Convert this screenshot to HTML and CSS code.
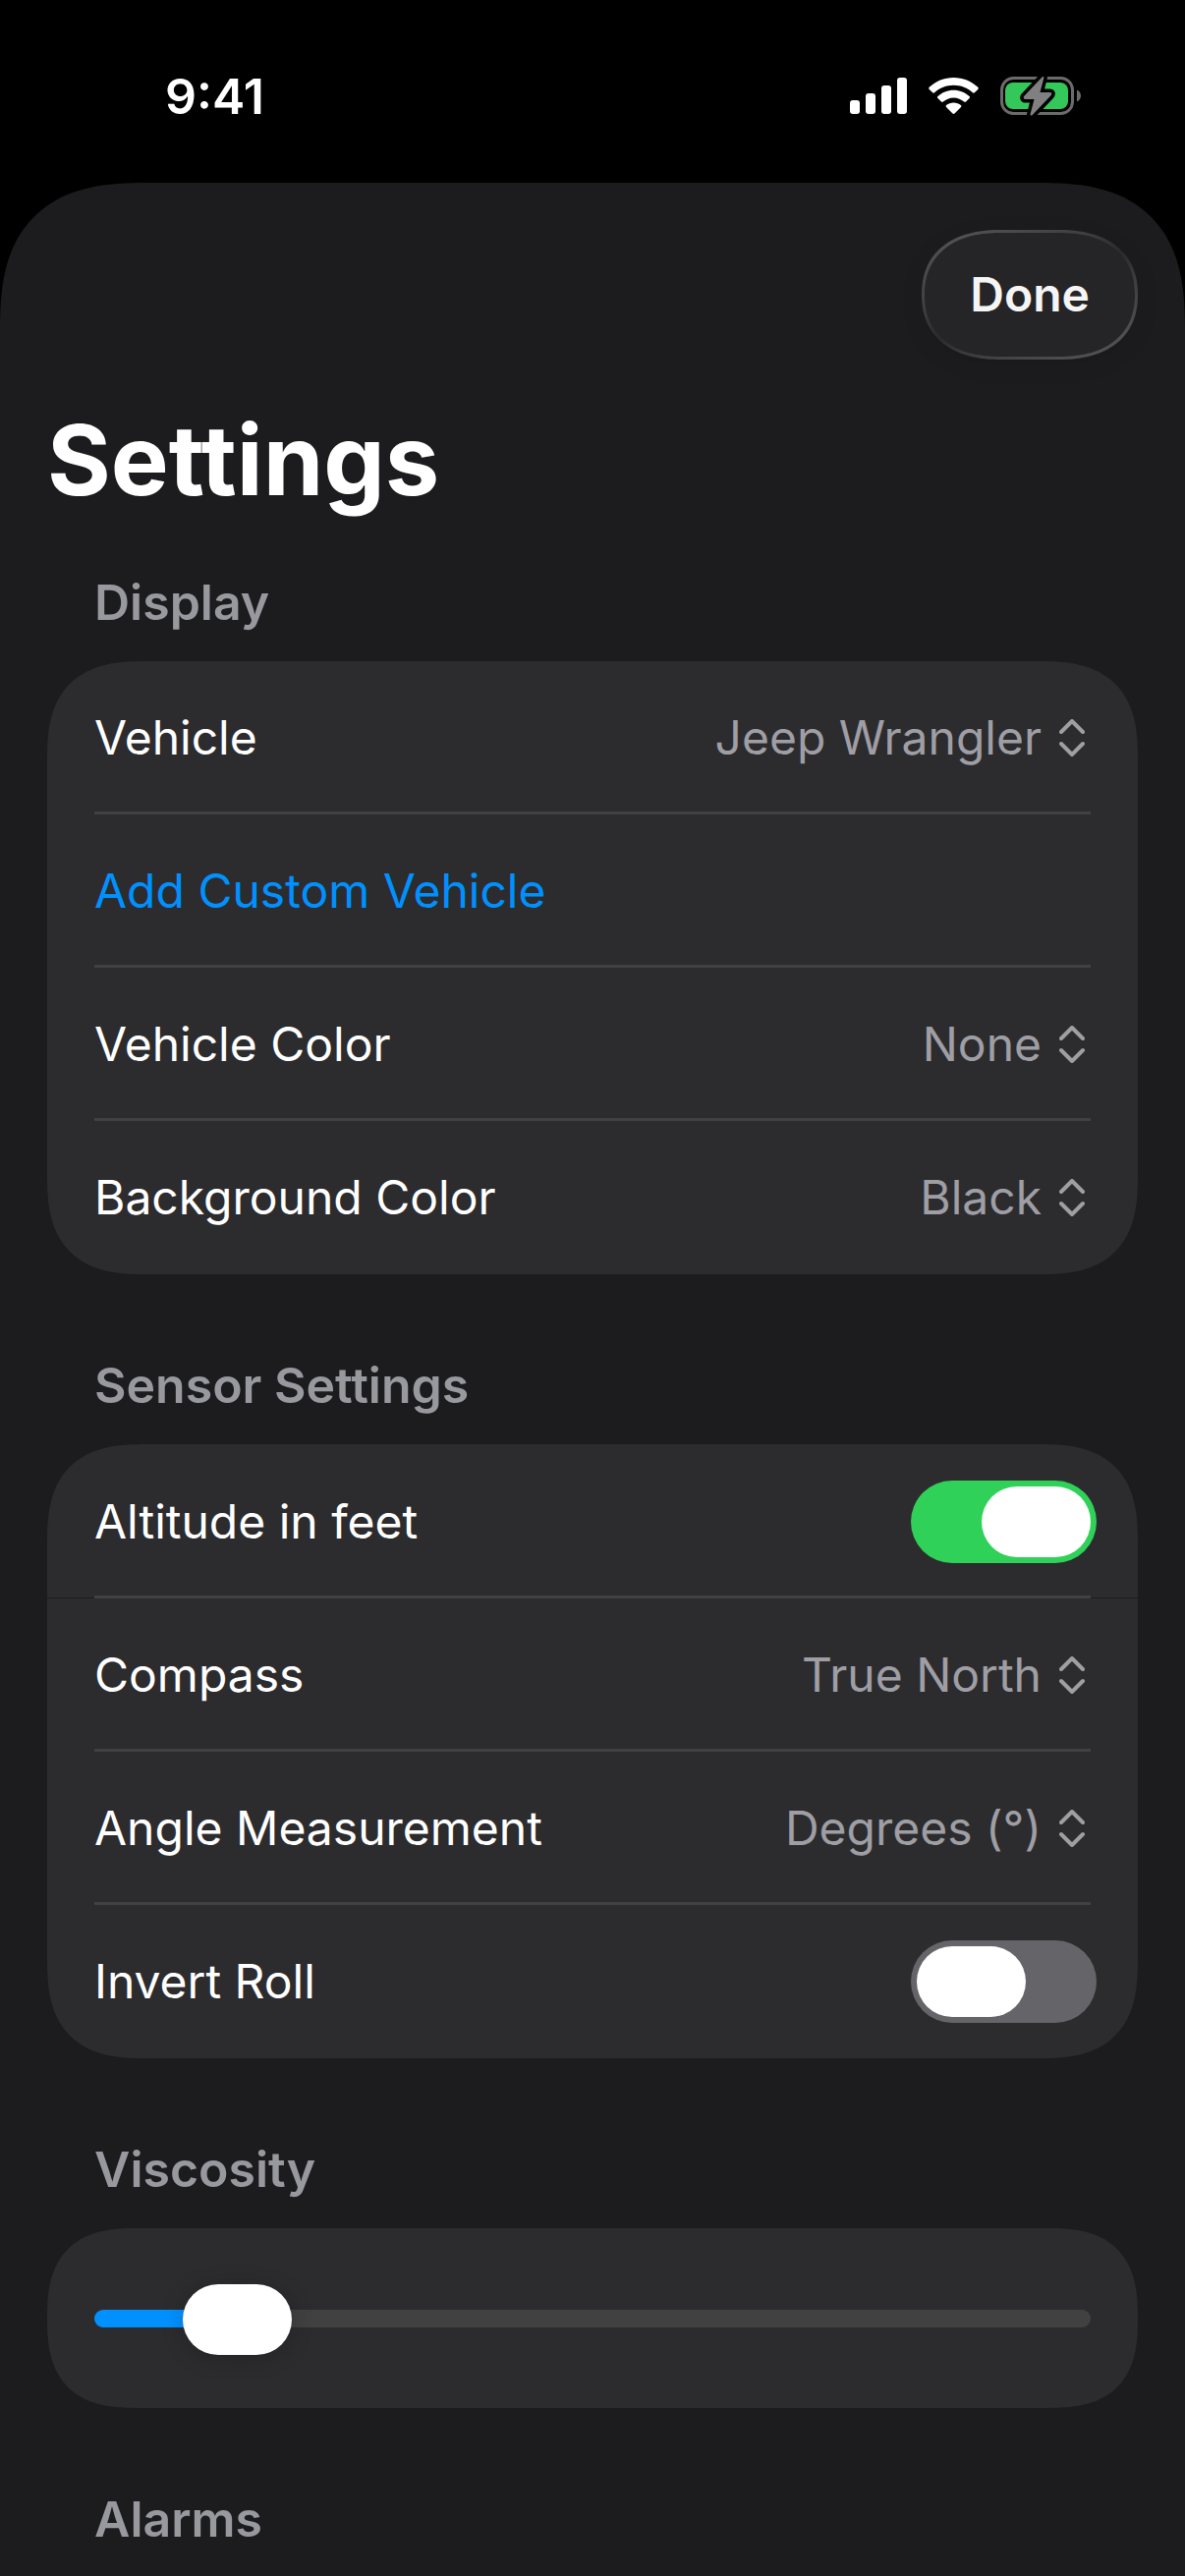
FILE: index.html
```html
<!DOCTYPE html>
<html lang="en">
<head>
  <meta charset="UTF-8" />
  <meta name="viewport" content="width=device-width, initial-scale=1" />
  <title>Settings</title>
  <link rel="stylesheet" href="styles.css">
</head>
<body>
  <header class="status-bar">
    <span class="status-time">9:41</span>
    <div class="status-icons">
      <svg class="icon-signal" width="58" height="38" viewBox="0 0 58 38" aria-hidden="true">
        <rect x="0" y="23" width="10" height="14" rx="3" />
        <rect x="16" y="16" width="10" height="21" rx="3" />
        <rect x="32" y="8" width="10" height="29" rx="3" />
        <rect x="48" y="0" width="10" height="37" rx="3" />
      </svg>
      <svg class="icon-wifi" width="51" height="38" viewBox="0 0 51 38" aria-hidden="true">
        <path d="M25.5 0C35 0 43.800 3.700 50.300 9.800C50.900 10.400 50.900 11.300 50.300 11.900L46.800 15.300C46.300 15.800 45.500 15.800 44.900 15.300C39.700 10.400 32.900 7.700 25.500 7.700C18.100 7.700 11.300 10.400 6.100 15.300C5.500 15.800 4.700 15.800 4.200 15.300L.7 11.900C.1 11.300 .1 10.400 .7 9.800C7.200 3.700 16 0 25.500 0Z" />
        <path d="M25.500 12.700C31.700 12.700 37.300 15.100 41.600 19C42.200 19.600 42.200 20.500 41.600 21.100L38 24.600C37.500 25.100 36.700 25.100 36.100 24.600C33.300 22 29.600 20.400 25.500 20.400C21.400 20.400 17.700 22 14.900 24.600C14.300 25.100 13.500 25.100 13 24.600L9.400 21.100C8.800 20.500 8.800 19.600 9.400 19C13.700 15.100 19.300 12.700 25.500 12.700Z" />
        <path d="M25.500 25.400C28.300 25.400 30.900 26.400 32.900 28C33.500 28.600 33.600 29.400 33 30L26.500 36.500C25.900 37.100 25.100 37.100 24.500 36.500L18 30C17.400 29.400 17.500 28.600 18.100 28C20.100 26.400 22.700 25.400 25.500 25.400Z" />
      </svg>
      <svg class="icon-battery" width="82" height="42" viewBox="0 0 82 42" aria-hidden="true">
        <rect class="battery-shell" x="1.500" y="2.500" width="72" height="36" rx="12" />
        <path class="battery-shell-cap" d="M78 14.500C80.300 15.300 82 17.700 82 20.500S80.300 25.700 78 26.500Z" />
        <rect class="battery-level" x="5" y="7" width="64" height="27" rx="8" />
        <path class="battery-bolt-gap" d="M42.500 1.500L24.500 20.500C23 22.300 23.600 24 25.800 24H34.500L30.600 39C30.300 40.800 31.700 41 32.700 40L51.300 20.500C53 18.600 52.500 17 50.300 17H40.500L44.300 2.500C44.700 .8 43.500 .5 42.500 1.500Z" />
        <path class="battery-bolt" d="M42.500 1.500L24.500 20.500C23 22.300 23.600 24 25.800 24H34.500L30.600 39C30.300 40.800 31.700 41 32.700 40L51.300 20.500C53 18.600 52.500 17 50.300 17H40.500L44.300 2.500C44.700 .8 43.500 .5 42.500 1.500Z" />
      </svg>
    </div>
  </header>

  <main class="sheet">
    <div class="sheet-toolbar">
      <button type="button" class="done-button">Done</button>
    </div>
    <h1 class="sheet-title">Settings</h1>

    <section class="group">
      <h2 class="group-title">Display</h2>
      <div class="card">
        <div class="row">
          <label for="vehicle">Vehicle</label>
          <select id="vehicle" class="picker">
            <option>Jeep Wrangler</option>
          </select>
          <svg class="chevrons" viewBox="0 0 26 38" aria-hidden="true"><path d="M2 13L13 2L24 13M2 25L13 36L24 25" /></svg>
        </div>
        <div class="row">
          <button type="button" class="link-button">Add Custom Vehicle</button>
        </div>
        <div class="row">
          <label for="vehicleColor">Vehicle Color</label>
          <select id="vehicleColor" class="picker">
            <option>None</option>
          </select>
          <svg class="chevrons" viewBox="0 0 26 38" aria-hidden="true"><path d="M2 13L13 2L24 13M2 25L13 36L24 25" /></svg>
        </div>
        <div class="row">
          <label for="backgroundColor">Background Color</label>
          <select id="backgroundColor" class="picker">
            <option>Black</option>
          </select>
          <svg class="chevrons" viewBox="0 0 26 38" aria-hidden="true"><path d="M2 13L13 2L24 13M2 25L13 36L24 25" /></svg>
        </div>
      </div>
    </section>

    <section class="group">
      <h2 class="group-title">Sensor Settings</h2>
      <div class="card">
        <div class="row row-split">
          <label for="altitudeFeet">Altitude in feet</label>
          <input type="checkbox" role="switch" id="altitudeFeet" class="switch" checked />
        </div>
        <div class="row">
          <label for="compass">Compass</label>
          <select id="compass" class="picker">
            <option>True North</option>
          </select>
          <svg class="chevrons" viewBox="0 0 26 38" aria-hidden="true"><path d="M2 13L13 2L24 13M2 25L13 36L24 25" /></svg>
        </div>
        <div class="row">
          <label for="angle">Angle Measurement</label>
          <select id="angle" class="picker">
            <option>Degrees (°)</option>
          </select>
          <svg class="chevrons" viewBox="0 0 26 38" aria-hidden="true"><path d="M2 13L13 2L24 13M2 25L13 36L24 25" /></svg>
        </div>
        <div class="row">
          <label for="invertRoll">Invert Roll</label>
          <input type="checkbox" role="switch" id="invertRoll" class="switch" />
        </div>
      </div>
    </section>

    <section class="group">
      <h2 class="group-title"><label for="viscosity">Viscosity</label></h2>
      <div class="card card-slider">
        <input type="range" id="viscosity" class="slider" min="0" max="100" value="10" />
      </div>
    </section>

    <section class="group">
      <h2 class="group-title">Alarms</h2>
    </section>
  </main>
</body>
</html>
```

FILE: styles.css
```css
* {
  box-sizing: border-box;
}

body {
  display: flex;
  flex-direction: column;
  min-height: 100vh;
  margin: 0;
  background: #000;
  color: #fff;
  font-family: Inter, "Liberation Sans", sans-serif;
  font-size: 50px;
  line-height: 60px;
}

button, select, input {
  margin: 0;
  font: inherit;
}

/* status bar */
.status-bar {
  display: flex;
  justify-content: space-between;
  align-items: center;
  padding: 68px 106px 58px 168px;
}

.status-time {
  font-weight: 600;
}

.status-icons {
  display: flex;
  align-items: center;
  gap: 22px;
}

.icon-signal, .icon-wifi {
  fill: #fff;
}

.battery-shell {
  fill: none;
  stroke: #6b6b6b;
  stroke-width: 3;
}

.battery-shell-cap {
  fill: #6b6b6b;
}

.battery-level {
  fill: #34c759;
}

.battery-bolt {
  fill: #808080;
}

.battery-bolt-gap {
  stroke: #000;
  stroke-width: 7;
}

/* sheet */
.sheet {
  flex: 1;
  padding: 48px 48px 28px;
  background: #1c1c1e;
  border-radius: 117px 117px 0 0;
}

.sheet-toolbar {
  display: flex;
  justify-content: flex-end;
}

.done-button {
  height: 132px;
  padding: 0 46px;
  border: 3px solid transparent;
  border-radius: 66px;
  background:
    linear-gradient(#252527, #252527) padding-box,
    linear-gradient(155deg, #58585b, #3e3e40 35%, #2a2a2c 50%, #3e3e40 65%, #58585b) border-box;
  box-shadow: 0 6px 24px rgba(0, 0, 0, 0.08);
  color: #f5f5f5;
  font-size: 48px;
  font-weight: 600;
  cursor: pointer;
}

.sheet-title {
  margin: 42px 0 55px;
  font-size: 99px;
  font-weight: 700;
  line-height: 120px;
}

.group + .group {
  margin-top: 83px;
}

.group-title {
  margin: 0 48px 30px;
  color: #98989f;
  font-size: 50px;
  font-weight: 600;
}

.card {
  background: #2c2c2e;
  border-radius: 78px;
  overflow: hidden;
}

.row {
  display: flex;
  align-items: center;
  height: 156px;
  padding: 0 48px;
  font-size: 48px;
}

.row:not(:last-child) {
  background: linear-gradient(#414143, #414143) bottom / 100% 3px no-repeat content-box;
}

/* hairline between the switch row and the pickers */
.row-split:not(:last-child) {
  height: 157px;
  padding-bottom: 0;
  background:
    linear-gradient(#414143, #414143) bottom / 100% 3px no-repeat content-box,
    linear-gradient(#1c1c1e, #1c1c1e) bottom / 100% 1px no-repeat;
}

.picker {
  flex: 1;
  min-width: 0;
  height: 60px;
  padding: 0;
  border: none;
  appearance: none;
  background: none;
  color: #9f9ea5;
  text-align: right;
  text-align-last: right;
}

.chevrons {
  width: 26px;
  height: 38px;
  margin: 0 6px 0 18px;
  fill: none;
  stroke: #9f9ea5;
  stroke-width: 4;
  stroke-linecap: round;
  stroke-linejoin: round;
}

.link-button {
  padding: 0;
  border: none;
  background: none;
  color: #0091ff;
  cursor: pointer;
}

/* switch */
.switch {
  width: 189px;
  height: 84px;
  margin: 0 -6px 0 auto;
  padding: 6px;
  appearance: none;
  background: #656468;
  border-radius: 42px;
  cursor: pointer;
}

.switch::before {
  content: "";
  display: block;
  width: 111px;
  height: 72px;
  background: #fff;
  border-radius: 36px;
}

.switch:checked {
  background: #30d158;
}

.switch:checked::before {
  margin-left: auto;
}

/* slider */
.card-slider {
  display: flex;
  align-items: center;
  height: 183px;
  padding: 0 48px;
}

.slider {
  width: 100%;
  height: 72px;
  appearance: none;
  background: none;
}

.slider::-webkit-slider-runnable-track {
  height: 18px;
  border-radius: 9px;
  background: linear-gradient(to right, #0091ff 15%, #414141 15%);
}

.slider::-webkit-slider-thumb {
  width: 111px;
  height: 72px;
  margin-top: -26px;
  appearance: none;
  background: #fff;
  border-radius: 36px;
  box-shadow: 0 3px 24px rgba(0, 0, 0, 0.2);
}

/* continuous corners where the browser can draw them */
@supports (corner-shape: superellipse(1.4)) {
  .sheet {
    border-radius: 150px 150px 0 0;
    corner-shape: superellipse(1.4);
  }

  .card {
    border-radius: 100px;
    corner-shape: superellipse(1.4);
  }

  .done-button {
    border-radius: 80px / 66px;
    corner-shape: superellipse(1.2);
  }
}
```
